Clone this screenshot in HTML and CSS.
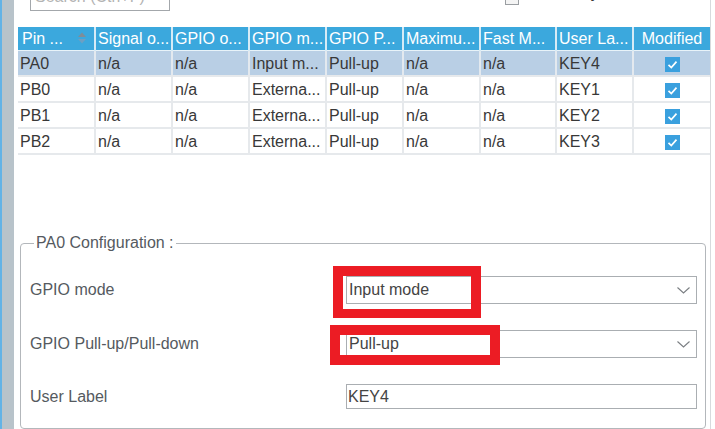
FILE: index.html
```html
<!DOCTYPE html>
<html>
<head>
<meta charset="utf-8">
<link rel="stylesheet" href="styles.css">
</head>
<body>
<div class="strip"></div>
<div class="gutter"></div>
<div class="panel">
  <div class="topbar">
    <div class="search">Search (Ctrl+F)</div>
    <div class="showmod"><span class="cb"></span><span class="cbtext">Show only Modified Pins</span></div>
  </div>
  <table class="pins">
    <colgroup>
      <col class="c"><col class="c"><col class="c"><col class="c"><col class="c"><col class="c"><col class="c6"><col class="c"><col class="c">
    </colgroup>
    <thead>
      <tr>
        <th><span class="thin">Pin ...</span><svg class="sort" width="10" height="14" viewBox="0 0 10 14"><path d="M1 6 L5 1.5 L9 6 Z" fill="#7f8d97"/><path d="M1 8 L5 12.5 L9 8 Z" fill="#6e9fc2"/></svg></th>
        <th>Signal o...</th>
        <th>GPIO o...</th>
        <th>GPIO m...</th>
        <th>GPIO P...</th>
        <th>Maximu...</th>
        <th>Fast M...</th>
        <th>User La...</th>
        <th class="ctr">Modified</th>
      </tr>
    </thead>
    <tbody>
      <tr class="sel"><td>PA0</td><td>n/a</td><td>n/a</td><td>Input m...</td><td>Pull-up</td><td>n/a</td><td>n/a</td><td>KEY4</td><td class="ctr"><span class="chk"><svg width="15" height="15" viewBox="0 0 15 15"><path d="M3.5 7.8 L6.3 10.5 L11.5 4.6" fill="none" stroke="#fff" stroke-width="1.7"/></svg></span></td></tr>
      <tr><td>PB0</td><td>n/a</td><td>n/a</td><td>Externa...</td><td>Pull-up</td><td>n/a</td><td>n/a</td><td>KEY1</td><td class="ctr"><span class="chk"><svg width="15" height="15" viewBox="0 0 15 15"><path d="M3.5 7.8 L6.3 10.5 L11.5 4.6" fill="none" stroke="#fff" stroke-width="1.7"/></svg></span></td></tr>
      <tr><td>PB1</td><td>n/a</td><td>n/a</td><td>Externa...</td><td>Pull-up</td><td>n/a</td><td>n/a</td><td>KEY2</td><td class="ctr"><span class="chk"><svg width="15" height="15" viewBox="0 0 15 15"><path d="M3.5 7.8 L6.3 10.5 L11.5 4.6" fill="none" stroke="#fff" stroke-width="1.7"/></svg></span></td></tr>
      <tr><td>PB2</td><td>n/a</td><td>n/a</td><td>Externa...</td><td>Pull-up</td><td>n/a</td><td>n/a</td><td>KEY3</td><td class="ctr"><span class="chk"><svg width="15" height="15" viewBox="0 0 15 15"><path d="M3.5 7.8 L6.3 10.5 L11.5 4.6" fill="none" stroke="#fff" stroke-width="1.7"/></svg></span></td></tr>
    </tbody>
  </table>
  <fieldset class="config">
    <legend>PA0 Configuration :</legend>
    <div class="form">
      <div class="lbl">GPIO mode</div>
      <div class="ctl">
        <div class="select"><span>Input mode</span><svg width="13" height="7" viewBox="0 0 13 7"><path d="M0.5 0.5 L6.5 6 L12.5 0.5" fill="none" stroke="#7a7e82" stroke-width="1.1"/></svg></div>
        <div class="mark m1"></div>
      </div>
      <div class="lbl">GPIO Pull-up/Pull-down</div>
      <div class="ctl">
        <div class="select"><span>Pull-up</span><svg width="13" height="7" viewBox="0 0 13 7"><path d="M0.5 0.5 L6.5 6 L12.5 0.5" fill="none" stroke="#7a7e82" stroke-width="1.1"/></svg></div>
        <div class="mark m2"></div>
      </div>
      <div class="lbl">User Label</div>
      <div class="ctl">
        <div class="textbox">KEY4</div>
      </div>
    </div>
  </fieldset>
</div>
</body>
</html>
```
FILE: styles.css
```css
html, body {
  margin: 0;
  padding: 0;
  background: #ffffff;
}
body {
  display: flex;
  width: 715px;
  height: 429px;
  overflow: hidden;
  font-family: "Liberation Sans", Arial, sans-serif;
  font-size: 16px;
  color: #3a3a3a;
}
.strip {
  width: 2px;
  flex: none;
  background: #63b3e6;
}
.gutter {
  width: 12px;
  flex: none;
  background: #b8c3ca;
}
.panel {
  flex: none;
  width: 692px;
  padding-left: 4px;
  border-right: 1px solid #d7dadd;
  display: flex;
  flex-direction: column;
}
.topbar {
  height: 27px;
  display: flex;
  align-items: flex-start;
  overflow: visible;
}
.search {
  margin-left: 12px;
  margin-top: -14px;
  width: 134px;
  height: 23px;
  line-height: 19px;
  border: 1px solid #a3a7ab;
  padding-left: 4px;
  color: #b3b3b3;
  flex: none;
}
.showmod {
  margin-left: 335px;
  margin-top: -13px;
  display: flex;
  align-items: flex-start;
  flex: none;
}
.cb {
  width: 12px;
  height: 15px;
  border: 1px solid #9a9ea2;
  background: #f4f4f4;
  margin-top: 1px;
}
.cbtext {
  margin-left: 6px;
  margin-top: -2px;
  line-height: 16px;
  color: #3a3a3a;
}
.pins {
  width: 692px;
  table-layout: fixed;
  border-collapse: collapse;
  border-spacing: 0;
}
.pins col.c { width: 77px; }
.pins col.c6 { width: 76px; }
.pins th {
  background: #3ba8dd;
  color: #ffffff;
  font-weight: normal;
  text-align: left;
  height: 23px;
  padding: 0 0 0 2px;
  border-right: 2px solid #d6ebf6;
  border-bottom: 1px solid #e8f3f9;
  white-space: nowrap;
  overflow: hidden;
  vertical-align: middle;
}
.pins th:first-child { padding-left: 4px; }
.pins th:last-child, .pins td:last-child { border-right: none; }
.pins td {
  height: 23px;
  padding: 1px 0 0 2px;
  border-right: 2px solid #e6e9ec;
  border-bottom: 2px solid #e6e9ec;
  white-space: nowrap;
  overflow: hidden;
  vertical-align: middle;
  color: #383838;
}
.pins tr.sel td {
  background: #b9cfe5;
  border-right-color: #e3e9ef;
}
.pins .ctr {
  text-align: center;
  padding-left: 0;
}
.thin {
  display: inline-block;
  width: 55px;
}
.sort {
  vertical-align: middle;
  margin-top: -2px;
}
.chk {
  display: inline-block;
  width: 15px;
  height: 15px;
  background: #3aa0de;
  vertical-align: middle;
  margin-top: 1px;
}
.chk svg { display: block; }
.config {
  margin: 79px 4px 0 2px;
  padding: 0 8px 19px 9px;
  border: 1px solid #b3b7bb;
  border-radius: 4px;
  min-width: 0;
}
.config legend {
  padding: 0 2px;
  margin-left: 4px;
  line-height: 18px;
  color: #555a5f;
}
.form {
  margin-top: 24px;
  display: grid;
  grid-template-columns: 316px 351px;
  grid-template-rows: 28px 28px 25px;
  row-gap: 26px;
  align-items: center;
}
.lbl {
  color: #555a60;
  line-height: 18px;
}
.ctl {
  position: relative;
  height: 100%;
}
.select {
  box-sizing: border-box;
  height: 100%;
  border: 1px solid #aaaeb2;
  background: #ffffff;
  display: flex;
  align-items: center;
  justify-content: space-between;
  padding: 0 6px 0 2px;
  color: #444;
}
.select svg { flex: none; }
.textbox {
  box-sizing: border-box;
  height: 100%;
  border: 1px solid #aaaeb2;
  padding: 0 0 0 1px;
  line-height: 23px;
  color: #444;
}
.mark {
  position: absolute;
  box-sizing: border-box;
  border: 10px solid #ec1c24;
}
.m1 {
  left: -13px;
  top: -10px;
  width: 148px;
  height: 52px;
  border-bottom-width: 9px;
}
.m2 {
  left: -16px;
  top: -5px;
  width: 170px;
  height: 40px;
}
```
